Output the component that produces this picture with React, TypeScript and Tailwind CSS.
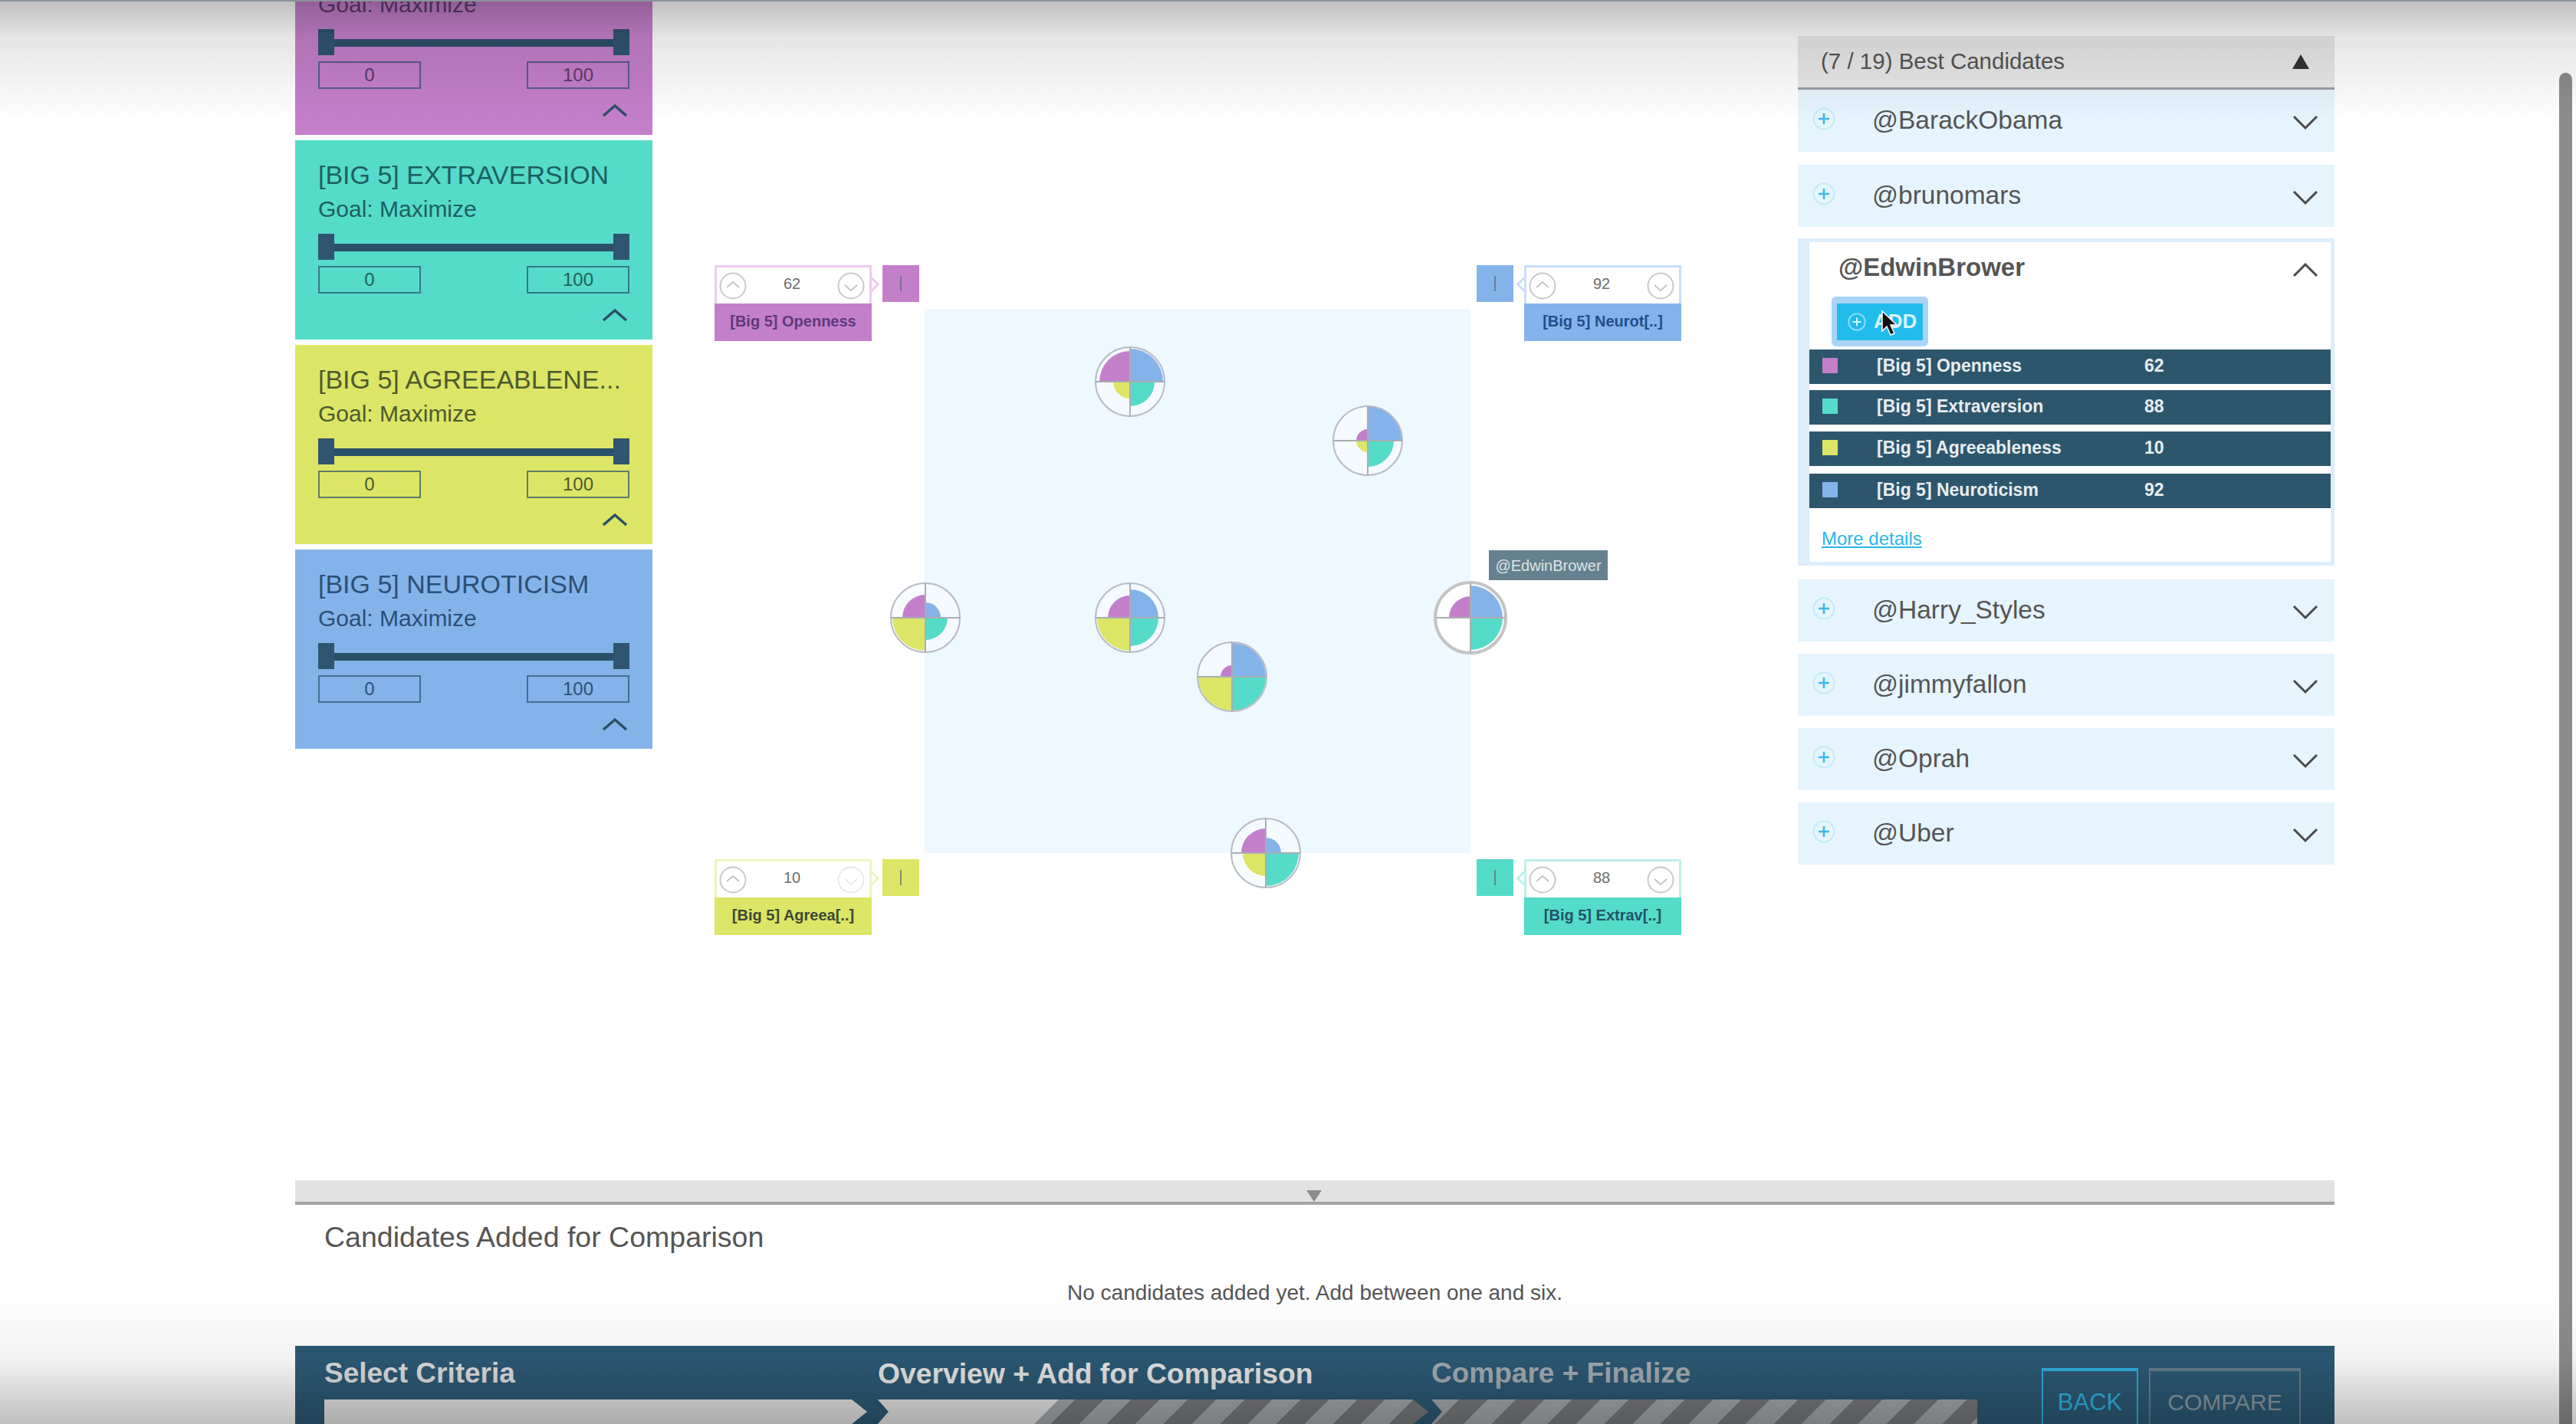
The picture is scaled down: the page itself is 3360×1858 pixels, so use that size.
import React from "react";

const PURPLE = "#c47fca";
const TEAL = "#55dbc9";
const YELLOW = "#dde566";
const BLUE = "#84b3ea";

function quad(cx: number, cy: number, r: number, q: number) {
  const sx = q === 0 || q === 3 ? -1 : 1;
  const sy = q === 0 || q === 1 ? -1 : 1;
  const sweep = q === 0 || q === 2 ? 1 : 0;
  const x0 = cx + sx * r;
  const y1 = cy + sy * r;
  return `M${cx} ${cy} L${x0} ${cy} A${r} ${r} 0 0 ${sweep} ${cx} ${y1} Z`;
}

function Pie({ x, y, p, b, t, w, big }: { x: number; y: number; p: number; b: number; t: number; w: number; big?: boolean }) {
  const R = 45;
  return (
    <svg
      className="absolute"
      style={{ left: x - 50, top: y - 50 }}
      width={100}
      height={100}
      viewBox="0 0 100 100"
    >
      <circle cx={50} cy={50} r={R} fill={big ? "#ffffff" : "#f7fbff"} fillOpacity={big ? 1 : 0.75} />
      <path d={quad(50, 50, p, 0)} fill={PURPLE} />
      <path d={quad(50, 50, b, 1)} fill={BLUE} />
      <path d={quad(50, 50, t, 2)} fill={TEAL} />
      {w > 0 && <path d={quad(50, 50, w, 3)} fill={YELLOW} />}
      <circle cx={50} cy={50} r={big ? 46 : R} fill="none" stroke={big ? "#c4c4c4" : "#b9bdc6"} strokeWidth={big ? 4 : 2} />
      <line x1={5} y1={50} x2={95} y2={50} stroke="#a9adb4" strokeWidth={2} />
      <line x1={50} y1={5} x2={50} y2={95} stroke="#a9adb4" strokeWidth={2} />
    </svg>
  );
}

function CircleBtn({ up, faint }: { up?: boolean; faint?: boolean }) {
  return (
    <svg width={36} height={36} viewBox="0 0 36 36" className="shrink-0">
      <circle cx={18} cy={18} r={16.5} fill="none" stroke={faint ? "#e9e9e9" : "#c9c9c9"} strokeWidth={2} />
      <polyline
        points={up ? "10,20 18,13 26,20" : "10,17 18,24 26,17"}
        fill="none"
        stroke={faint ? "#e9e9e9" : "#c4c4c4"}
        strokeWidth={2}
      />
    </svg>
  );
}

function Corner({
  className,
  side,
  value,
  label,
  color,
  edge,
  text,
  faintDown,
}: {
  className: string;
  side: "left" | "right";
  value: string;
  label: string;
  color: string;
  edge: string;
  text: string;
  faintDown?: boolean;
}) {
  const box = (
    <div className="relative w-[205px] shrink-0">
      <div
        className="relative z-10 flex h-[50px] items-center justify-between border-[3px] border-b-0 bg-white pl-[3px] pr-[6px]"
        style={{ borderColor: edge }}
      >
        <CircleBtn up />
        <span className="pb-[6px] text-[20px] text-[#6d6d6d]">{value}</span>
        <CircleBtn faint={faintDown} />
      </div>
      <div
        className="flex h-[49px] items-center justify-center pb-[3px] text-[20px] font-semibold"
        style={{ background: color, color: text }}
      >
        {label}
      </div>
      <div
        className={
          side === "left"
            ? "absolute left-[196px] top-[17px] size-[16px] rotate-45 border-r-[3px] border-t-[3px] bg-white"
            : "absolute right-[196px] top-[17px] size-[16px] rotate-45 border-b-[3px] border-l-[3px] bg-white"
        }
        style={{ borderColor: edge }}
      />
    </div>
  );
  const swatch = (
    <div className="flex h-[48px] w-[48px] shrink-0 items-center justify-center" style={{ background: color }}>
      <div className="h-[20px] w-[2px] bg-[#5c6b70]/70" />
    </div>
  );
  return (
    <div className={`absolute flex items-start gap-[14px] ${className}`}>
      {side === "left" ? box : swatch}
      {side === "left" ? swatch : box}
    </div>
  );
}

function Card({ title, color, text }: { title: string; color: string; text: string }) {
  return (
    <div className="h-[260px] w-full shrink-0 px-[30px] pt-[27px]" style={{ background: color, color: text }}>
      <div className="h-[36px] whitespace-nowrap text-[34px] leading-[36px]">{title}</div>
      <div className="mt-[10px] h-[34px] text-[30px] leading-[34px]">Goal: Maximize</div>
      <div className="relative mt-[15px] flex h-[34px] items-center justify-between">
        <div className="absolute inset-x-0 top-[13px] h-[10px] bg-[#2a5068]" />
        <div className="relative h-[34px] w-[21px] bg-[#2f5570]" />
        <div className="relative h-[34px] w-[21px] bg-[#2f5570]" />
      </div>
      <div className="mt-[8px] flex justify-between">
        <div className="flex h-[36px] w-[134px] items-center justify-center border-2 border-[#2a5068]/70 text-[24px]">0</div>
        <div className="flex h-[36px] w-[134px] items-center justify-center border-2 border-[#2a5068]/70 text-[24px]">100</div>
      </div>
      <div className="mt-[19px] flex justify-end pr-[2px]">
        <svg width={34} height={18} viewBox="0 0 34 18">
          <polyline points="2,16 17,3 32,16" fill="none" stroke="#2a5068" strokeWidth={3.5} />
        </svg>
      </div>
    </div>
  );
}

function PlusIcon({ white, size = 30 }: { white?: boolean; size?: number }) {
  return (
    <svg width={size} height={size} viewBox="0 0 30 30" className="shrink-0">
      <circle cx={15} cy={15} r={13.5} fill="none" stroke={white ? "#9fe3fb" : "#c2eafa"} strokeWidth={2} />
      <path d="M15 8v14M8 15h14" stroke={white ? "#d6f4fe" : "#3cb9e8"} strokeWidth={2.5} />
    </svg>
  );
}

function Chevron({ up }: { up?: boolean }) {
  return (
    <svg width={34} height={20} viewBox="0 0 34 20" className="shrink-0">
      <polyline points={up ? "2,18 17,3 32,18" : "2,2 17,17 32,2"} fill="none" stroke="#4a4a4a" strokeWidth={3} />
    </svg>
  );
}

function Row({ name, className }: { name: string; className: string }) {
  return (
    <div className={`flex h-[81px] items-center bg-[#e6f4fd] pl-[19px] pr-[21px] ${className}`}>
      <div className="mb-[5px] flex"><PlusIcon /></div>
      <span className="ml-[48px] flex-1 text-[33.5px] text-[#555]">{name}</span>
      <div className="mt-[5px] flex"><Chevron /></div>
    </div>
  );
}

function Metric({ label, value, color, className }: { label: string; value: string; color: string; className: string }) {
  return (
    <div className={`flex h-[45px] items-center bg-[#2d566d] pb-[3px] pl-[17px] text-[23px] font-semibold text-[#e8edf0] ${className}`}>
      <div className="size-[20px] shrink-0" style={{ background: color }} />
      <div className="ml-[51px] w-[349px] shrink-0">{label}</div>
      <div>{value}</div>
    </div>
  );
}

const stripes =
  "bg-[repeating-linear-gradient(135deg,#a3a8ac_0,#a3a8ac_26px,#77797c_26px,#77797c_52px)]";

export default function App() {
  return (
    <div className="relative flex h-[1858px] w-[3360px] flex-col overflow-hidden bg-white font-['Liberation_Sans',Arial,sans-serif]">
      <div className="flex h-[1540px] shrink-0 pl-[385px]">
        <div className="-mt-[84px] flex w-[466px] shrink-0 flex-col gap-[7px]">
          <Card title="[BIG 5] OPENNESS" color={PURPLE} text="#5a3a6a" />
          <Card title="[BIG 5] EXTRAVERSION" color={TEAL} text="#1c6060" />
          <Card title="[BIG 5] AGREEABLENE..." color={YELLOW} text="#4c5a30" />
          <Card title="[BIG 5] NEUROTICISM" color={BLUE} text="#2c4f78" />
        </div>

        <div className="relative w-[1494px] shrink-0">
          <div className="absolute left-[355px] top-[403px] h-[710px] w-[712px] bg-[#eef8ff]" />
          <Corner className="left-[81px] top-[346px]" side="left" value="62" label="[Big 5] Openness" color={PURPLE} edge="#eecbf0" text="#5c3a7c" />
          <Corner className="left-[1075px] top-[346px]" side="right" value="92" label="[Big 5] Neurot[..]" color={BLUE} edge="#c9def7" text="#1f4f8c" />
          <Corner className="left-[81px] top-[1121px]" side="left" value="10" label="[Big 5] Agreea[..]" color={YELLOW} edge="#f0f3c0" text="#3e4a34" faintDown />
          <Corner className="left-[1075px] top-[1121px]" side="right" value="88" label="[Big 5] Extrav[..]" color={TEAL} edge="#bdf1e9" text="#1f5566" />

          <Pie x={623} y={498} p={40} b={43} t={32} w={22} />
          <Pie x={933} y={575} p={15} b={45} t={34} w={15} />
          <Pie x={356} y={806} p={30} b={20} t={29} w={43} />
          <Pie x={623} y={806} p={29} b={37} t={37} w={43} />
          <Pie x={756} y={883} p={15} b={44} t={44} w={44} />
          <Pie x={1067} y={806} p={28} b={42} t={42} w={0} big />
          <Pie x={800} y={1113} p={32} b={20} t={43} w={30} />

          <div className="absolute left-[1091px] top-[718px] flex h-[39px] w-[155px] items-center justify-center bg-[#65818f] text-[20px] text-[#dfe5e8]">
            @EdwinBrower
          </div>
        </div>

        <div className="mt-[47px] flex h-fit w-[700px] shrink-0 flex-col">
          <div className="flex h-[70px] items-center justify-between border-b-[3px] border-[#9a9fa3] bg-[#e8e8e8] pl-[30px] pr-[33px]">
            <span className="text-[29.5px] text-[#555]">(7 / 19) Best Candidates</span>
            <span className="h-0 w-0 border-x-[11px] border-b-[19px] border-x-transparent border-b-[#333]" />
          </div>
          <Row name="@BarackObama" className="" />
          <Row name="@brunomars" className="mt-[17px]" />
          <div className="mt-[15px] flex h-[427px] flex-col border-[5px] border-l-[15px] border-[#dcedfb] bg-white">
            <div className="flex h-[71px] shrink-0 items-center pl-[38px] pr-[16px]">
              <span className="mb-[6px] flex-1 text-[33px] font-bold text-[#555]">@EdwinBrower</span>
              <Chevron up />
            </div>
            <div className="ml-[29px] flex h-[65px] w-[126px] shrink-0 items-center justify-center rounded-[6px] bg-[#a9d4f7]">
              <div className="relative flex h-[48px] w-[112px] items-center gap-[10px] bg-[#22bcec] pl-[14px] text-[26px] font-bold text-[#d9f4fd]">
                <PlusIcon white size={24} />
                ADD
                <svg width={26} height={38} viewBox="0 0 26 38" className="absolute left-[56px] top-[8px]">
                  <path d="M3 2 L3 28 L9 22 L14 33 L19 31 L14 20 L22 20 Z" fill="#111" stroke="#fff" strokeWidth={1.5} />
                </svg>
              </div>
            </div>
            <Metric className="mt-[4px]" label="[Big 5] Openness" value="62" color={PURPLE} />
            <Metric className="mt-[8px]" label="[Big 5] Extraversion" value="88" color={TEAL} />
            <Metric className="mt-[9px]" label="[Big 5] Agreeableness" value="10" color={YELLOW} />
            <Metric className="mt-[10px]" label="[Big 5] Neuroticism" value="92" color={BLUE} />
            <div className="mt-[22px] pl-[16px] text-[24px] text-[#2bb6e8] underline">More details</div>
          </div>
          <Row name="@Harry_Styles" className="mt-[18px]" />
          <Row name="@jimmyfallon" className="mt-[16px]" />
          <Row name="@Oprah" className="mt-[16px]" />
          <Row name="@Uber" className="mt-[16px]" />
        </div>
      </div>

      <div className="relative ml-[385px] h-[32px] w-[2660px] shrink-0 border-b-[4px] border-[#a3a3a3] bg-[#e2e2e2]">
        <span className="absolute left-[1319px] top-[13px] h-0 w-0 border-x-[10px] border-t-[15px] border-x-transparent border-t-[#8c8c8c]" />
      </div>

      <div className="ml-[385px] flex h-[184px] w-[2660px] shrink-0 flex-col">
        <div className="mt-[21px] pl-[38px] text-[37.5px] leading-[42px] text-[#555]">Candidates Added for Comparison</div>
        <div className="mt-[36px] text-center text-[28px] leading-[32px] text-[#555]">No candidates added yet. Add between one and six.</div>
      </div>

      <div className="ml-[385px] flex h-[102px] w-[2660px] shrink-0 bg-[#2d5a75] pl-[38px]">
        <div className="w-[722px] shrink-0">
          <div className="mt-[14px] h-[44px] text-[37px] font-bold leading-[44px] text-[#dedede]">Select Criteria</div>
          <div className="mt-[12px] h-[32px] w-[708px] bg-[#e6e6e6] [clip-path:polygon(0_0,688px_0,708px_16px,688px_32px,0_32px)]" />
        </div>
        <div className="w-[722px] shrink-0">
          <div className="mt-[14px] h-[44px] text-[37.3px] font-bold leading-[44px] text-[#e8e8e8]">Overview + Add for Comparison</div>
          <div className={`mt-[12px] h-[32px] w-[718px] ${stripes} [clip-path:polygon(0_0,698px_0,718px_16px,698px_32px,0_32px,14px_16px)]`}>
            <div className="h-full w-[236px] bg-[#e6e6e6] [clip-path:polygon(0_0,236px_0,204px_100%,0_100%)]" />
          </div>
        </div>
        <div className="w-[796px] shrink-0">
          <div className="mt-[14px] h-[44px] text-[37px] font-bold leading-[44px] text-[#a3adb3]">Compare + Finalize</div>
          <div className={`mt-[12px] h-[32px] w-[712px] ${stripes} [clip-path:polygon(0_0,712px_0,712px_32px,0_32px,14px_16px)]`} />
        </div>
        <div className="mt-[29px] flex h-[90px] w-[126px] shrink-0 items-start justify-center border-2 border-t-[4px] border-[#2eb0e0] pt-[18px] text-[31px] text-[#30b4e4]">BACK</div>
        <div className="ml-[14px] mt-[29px] flex h-[90px] w-[198px] shrink-0 items-start justify-center border-2 border-t-[4px] border-[#6a808e] pt-[18px] text-[30px] text-[#8a9aa3]">COMPARE</div>
      </div>

      <div className="pointer-events-none absolute right-[5px] top-[95px] h-[1763px] w-[17px] rounded-t-full bg-[#8c8c8c]" />
      <div className="pointer-events-none absolute inset-x-0 top-0 h-[160px] border-t-[2px] border-[#8a929a] bg-gradient-to-b from-black/25 via-black/10 via-30% to-transparent" />
      <div className="pointer-events-none absolute inset-x-0 bottom-0 h-[170px] bg-gradient-to-t from-black/25 via-black/5 via-50% to-transparent" />
    </div>
  );
}
